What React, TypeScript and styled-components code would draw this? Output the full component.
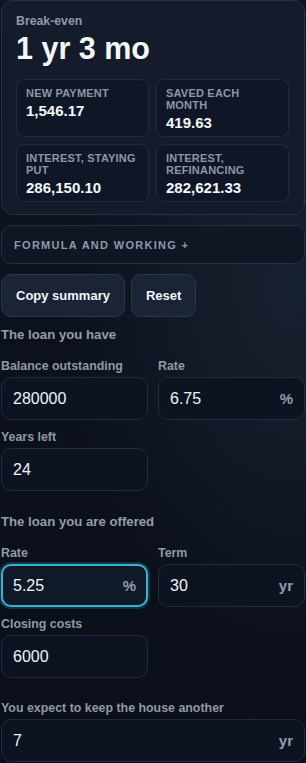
import React from 'react'
import styled, { createGlobalStyle, css } from 'styled-components'

const GlobalStyle = createGlobalStyle`
  html, body {
    margin: 0;
    padding: 0;
    background: #0a0f19;
  }
  body {
    font-family: 'Liberation Sans', Arial, sans-serif;
    color: #e8edf4;
    min-height: 763px;
    background:
      radial-gradient(ellipse at 95% 38%, rgba(40, 52, 70, 0.45), transparent 55%),
      linear-gradient(180deg, #0d1320 0%, #0a0f19 100%);
  }
  * { box-sizing: border-box; }
`

const Page = styled.div`
  display: flex;
  flex-direction: column;
  padding: 0 1px;
`

const ResultCard = styled.section`
  background: #141c2c;
  border: 1px solid #273245;
  border-radius: 12px;
  padding: 12px 15px 12px 14px;
`

const Eyebrow = styled.div`
  font-size: 12.3px;
  line-height: 16px;
  font-weight: 700;
  color: #8f99a8;
`

const BigFigure = styled.div`
  margin-top: 2px;
  font-size: 30.5px;
  line-height: 34px;
  font-weight: 700;
  color: #f4f7fb;
`

const StatGrid = styled.div`
  display: grid;
  grid-template-columns: 1fr 1fr;
  gap: 7px;
  margin-top: 14px;
`

const Stat = styled.div`
  background: #0f1626;
  border: 1px solid #222c3d;
  border-radius: 8px;
  padding: 7px 9px 4px;
`

const StatLabel = styled.div`
  font-size: 11px;
  line-height: 12px;
  font-weight: 700;
  letter-spacing: 0.2px;
  text-transform: uppercase;
  color: #8d97a6;
`

const StatValue = styled.div`
  margin-top: 3px;
  font-size: 15px;
  line-height: 18px;
  font-weight: 700;
  color: #f4f7fb;
`

const Disclosure = styled.div`
  margin-top: 10px;
  height: 39px;
  display: flex;
  align-items: center;
  padding: 0 12px;
  border: 1px solid #253041;
  border-radius: 10px;
  background: #0f1624;
  font-size: 11px;
  font-weight: 700;
  letter-spacing: 1.3px;
  text-transform: uppercase;
  color: #8f99a8;
`

const Actions = styled.div`
  display: flex;
  gap: 6px;
  margin-top: 10px;
`

const Button = styled.button`
  height: 43px;
  padding: 0 14px;
  border: 1px solid #2c3748;
  border-radius: 10px;
  background: #1b2434;
  color: #f1f5f9;
  font-family: 'Liberation Sans', Arial, sans-serif;
  font-size: 13px;
  font-weight: 700;
`

const Section = styled.section<{ $gap: number }>`
  margin-top: ${p => p.$gap}px;
  display: flex;
  flex-direction: column;
`

const SectionTitle = styled.h2`
  margin: 0 0 15px;
  font-size: 13.2px;
  line-height: 16px;
  font-weight: 700;
  color: #939dac;
`

const FieldGrid = styled.div`
  display: grid;
  grid-template-columns: 1fr 1fr;
  column-gap: 10px;
  row-gap: 9px;
`

const Field = styled.label<{ $wide?: boolean }>`
  display: flex;
  flex-direction: column;
  gap: 3px;
  ${p => p.$wide && css`grid-column: 1 / -1;`}
`

const FieldLabel = styled.span`
  font-size: 12.4px;
  line-height: 16px;
  font-weight: 700;
  color: #8f99a8;
`

const InputBox = styled.div<{ $focused?: boolean }>`
  height: 43px;
  display: flex;
  align-items: center;
  padding: 0 11px;
  border-radius: 10px;
  border: 1px solid #222c3c;
  background: #0d1421;
  ${p => p.$focused && css`
    border: 2px solid #3bb3cc;
    padding: 0 10px;
    background: #0f1927;
    box-shadow: 0 0 0 2px rgba(40, 120, 140, 0.35);
  `}
`

const Value = styled.span`
  flex: 1;
  font-size: 16px;
  color: #eef2f7;
`

const Suffix = styled.span`
  font-size: 15px;
  font-weight: 700;
  color: #939dac;
`

type FieldProps = {
  label: string
  value: string
  suffix?: string
  wide?: boolean
  focused?: boolean
}

const InputField = ({ label, value, suffix, wide, focused }: FieldProps) => (
  <Field $wide={wide}>
    <FieldLabel>{label}</FieldLabel>
    <InputBox $focused={focused}>
      <Value>{value}</Value>
      {suffix && <Suffix>{suffix}</Suffix>}
    </InputBox>
  </Field>
)

const stats = [
  { label: 'New payment', value: '1,546.17' },
  { label: 'Saved each month', value: '419.63' },
  { label: 'Interest, staying put', value: '286,150.10' },
  { label: 'Interest, refinancing', value: '282,621.33' },
]

export default function App() {
  return (
    <>
      <GlobalStyle />
      <Page>
        <ResultCard>
          <Eyebrow>Break-even</Eyebrow>
          <BigFigure>1 yr 3 mo</BigFigure>
          <StatGrid>
            {stats.map(s => (
              <Stat key={s.label}>
                <StatLabel>{s.label}</StatLabel>
                <StatValue>{s.value}</StatValue>
              </Stat>
            ))}
          </StatGrid>
        </ResultCard>

        <Disclosure>Formula and working +</Disclosure>

        <Actions>
          <Button>Copy summary</Button>
          <Button>Reset</Button>
        </Actions>

        <Section $gap={10}>
          <SectionTitle>The loan you have</SectionTitle>
          <FieldGrid>
            <InputField label="Balance outstanding" value="280000" />
            <InputField label="Rate" value="6.75" suffix="%" />
            <InputField label="Years left" value="24" />
          </FieldGrid>
        </Section>

        <Section $gap={23}>
          <SectionTitle>The loan you are offered</SectionTitle>
          <FieldGrid>
            <InputField label="Rate" value="5.25" suffix="%" focused />
            <InputField label="Term" value="30" suffix="yr" />
            <InputField label="Closing costs" value="6000" />
          </FieldGrid>
        </Section>

        <Section $gap={22}>
          <FieldGrid>
            <InputField label="You expect to keep the house another" value="7" suffix="yr" wide />
          </FieldGrid>
        </Section>
      </Page>
    </>
  )
}
